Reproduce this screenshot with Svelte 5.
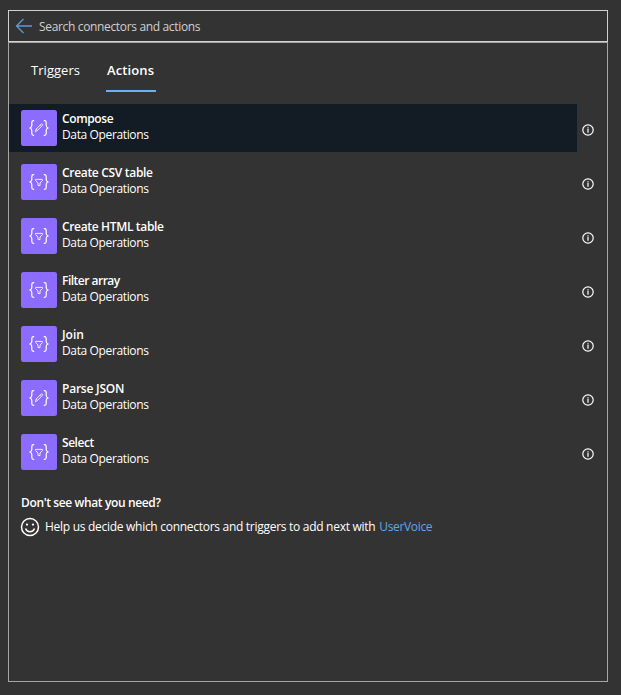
<script>
  const actions = [
    { name: 'Compose', icon: 'pencil', spacing: -0.37 },
    { name: 'Create CSV table', icon: 'funnel', spacing: -0.31 },
    { name: 'Create HTML table', icon: 'funnel', spacing: -0.34 },
    { name: 'Filter array', icon: 'funnel', spacing: -0.5 },
    { name: 'Join', icon: 'funnel', spacing: 0 },
    { name: 'Parse JSON', icon: 'pencil', spacing: -0.22 },
    { name: 'Select', icon: 'funnel', spacing: -0.45 },
  ];
  let selected = $state(0);
</script>

<main>
  <div class="search">
    <svg class="back" width="18" height="16" viewBox="0 0 18 16"><path d="M8.5 1 1.5 8l7 7M1.5 8H17" /></svg>
    <span class="placeholder">Search connectors and actions</span>
  </div>
  <section class="panel">
    <nav>
      <button class="tab triggers">Triggers</button>
      <button class="tab active">Actions</button>
    </nav>
    <ul>
      {#each actions as action, i}
        <li>
          <button class="action" class:selected={selected === i} onclick={() => (selected = i)}>
            <svg class="tile" width="36" height="36" viewBox="0 0 36 36">
              <rect width="36" height="36" rx="2.5" />
              <path d="M13.2 10.6h-.7c-1.2 0-1.7.6-1.7 1.8v2.9c0 1.5-.4 2.2-1.6 2.7 1.2.5 1.6 1.2 1.6 2.7v2.9c0 1.2.5 1.8 1.7 1.8h.7M22.8 10.6h.7c1.2 0 1.7.6 1.7 1.8v2.9c0 1.5.4 2.2 1.6 2.7-1.2.5-1.6 1.2-1.6 2.7v2.9c0 1.2-.5 1.8-1.7 1.8h-.7" />
              {#if action.icon === 'pencil'}
                <path class="thin" d="m14.4 21.8.7-2.7 4.9-4.9c.5-.5 1-.5 1.4-.1s.4.9-.1 1.4l-4.9 5zM19.2 15l1.4 1.4M15.2 19l1.6 1.6" />
              {:else}
                <path class="thin" d="M14.6 15.4h6.8v1.1L19 19v2.6h-2V19l-2.4-2.5z" />
              {/if}
            </svg>
            <span class="labels">
              <b style:letter-spacing="{action.spacing}px">{action.name}</b>
              <span>Data Operations</span>
            </span>
          </button>
          <svg class="info" width="12" height="12" viewBox="0 0 12 12">
            <circle cx="6" cy="6" r="5.2" /><path d="M6 3.2v1.1M6 4.8v4" />
          </svg>
        </li>
      {/each}
    </ul>
    <footer>
      <b>Don't see what you need?</b>
      <p>
        <svg class="smile" width="20" height="20" viewBox="0 0 20 20">
          <circle cx="10" cy="10" r="8.5" /><path d="M5.5 11.5a4.8 4.8 0 0 0 9 0" />
          <circle class="eye" cx="7" cy="7.6" r="1.15" /><circle class="eye" cx="13" cy="7.6" r="1.15" />
        </svg>
        <span class="help">Help us decide which connectors and triggers to add next with</span>
        <a href="#uservoice">UserVoice</a>
      </p>
    </footer>
  </section>
</main>

<style>
  :global(body) { background: #333; }
  main {
    box-sizing: border-box;
    height: 695px;
    padding: 10px 13px 13px 8px;
    display: flex;
    flex-direction: column;
    background: #333;
    color: #fff;
    font: 12px/16px 'Segoe UI', 'Open Sans', 'Noto Sans', sans-serif;
    letter-spacing: -0.37px;
    white-space: nowrap;
  }
  svg { flex: none; fill: none; stroke: #fff; }
  button { border: 0; padding: 0; background: none; color: inherit; font: inherit; letter-spacing: inherit; text-align: left; }
  b { font-weight: 600; }
  .search {
    box-sizing: border-box;
    height: 32px;
    border: 1px solid #d2d0ce;
    display: flex;
    align-items: center;
    gap: 6px;
    padding-left: 6px;
    color: #d2d0ce;
  }
  .placeholder { letter-spacing: -0.34px; padding-top: 2px; }
  .back { stroke: #5a9bd8; stroke-width: 1.3; }
  .panel {
    box-sizing: border-box;
    width: 600px;
    flex: 1;
    border: 1px solid #a6a6a6;
  }
  nav { display: flex; padding: 5px 0 0 22px; gap: 26px; height: 44px; margin-bottom: 12px; }
  .tab { box-sizing: border-box; height: 44px; padding-top: 2px; font-size: 13px; letter-spacing: 0.05px; border-bottom: 2px solid transparent; }
  .triggers { width: 49px; }
  .active { width: 50px; padding-left: 1px; font-weight: 600; border-color: #6cb0f0; letter-spacing: 0.12px; }
  ul { margin: 0; padding: 0; list-style: none; display: flex; flex-direction: column; gap: 6px; }
  li { display: flex; align-items: center; }
  .action { width: 568px; height: 48px; padding-left: 12px; display: flex; align-items: center; gap: 5px; }
  .selected { background: #131c24; }
  .tile rect { fill: #8c6cff; stroke: none; }
  .tile path { stroke-width: 1.2; }
  .tile .thin { stroke-width: 1; stroke: #eee9ff; }
  .labels { display: flex; flex-direction: column; margin-top: -2px; }
  .info { margin: 3px 0 0 5px; stroke-width: 1.2; }
  footer { padding: 19px 0 0 12px; }
  p { margin: 6px 0 0; display: flex; align-items: center; height: 20px; }
  .smile { margin: 0 5px 0 -1px; stroke-width: 1.5; }
  .help { letter-spacing: -0.285px; }
  a { color: #60a8e4; text-decoration: none; margin-left: 4px; letter-spacing: -0.34px; }
  .eye { fill: #fff; stroke: none; }
</style>
